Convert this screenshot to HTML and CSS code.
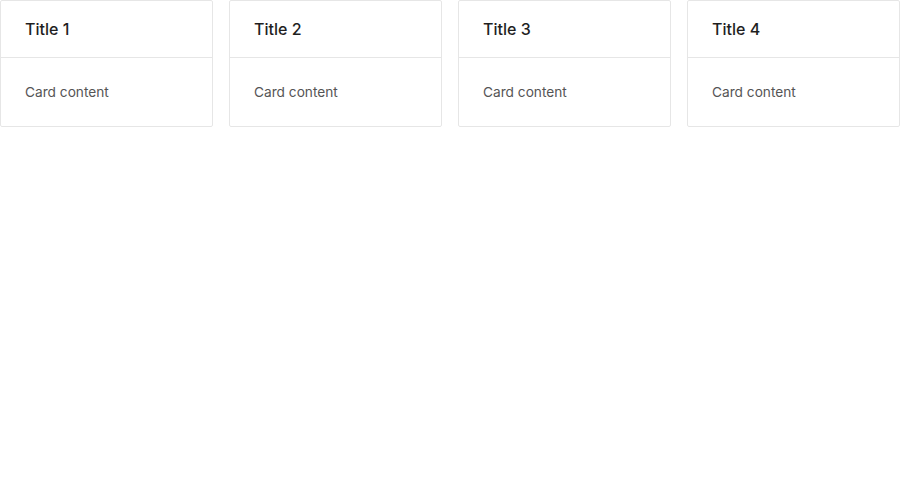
FILE: index.html
```html
<!DOCTYPE html>
<html>
<head>
<meta charset="utf-8">
<link rel="stylesheet" href="styles.css">
</head>
<body>
<div class="row">
  <div class="card"><div class="card-head">Title 1</div><div class="card-body">Card content</div></div>
  <div class="card"><div class="card-head">Title 2</div><div class="card-body">Card content</div></div>
  <div class="card"><div class="card-head">Title 3</div><div class="card-body">Card content</div></div>
  <div class="card"><div class="card-head">Title 4</div><div class="card-body">Card content</div></div>
</div>
</body>
</html>
```
FILE: styles.css
```css
html, body { margin: 0; padding: 0; background: #fff; }
body { font-family: Inter, "Noto Sans", sans-serif; }
.row { display: grid; grid-template-columns: repeat(4, 1fr); gap: 16px; width: 900px; }
.card { border: 1px solid #e6e6e6; border-radius: 2px; background: #fff; }
.card-head { min-height: 56px; padding: 0 24px; display: flex; align-items: center; font-size: 16px; font-weight: 500; color: #1f1f1f; border-bottom: 1px solid #e6e6e6; }
.card-body { padding: 24px; font-size: 13.7px; line-height: 20px; color: #555; }
```
